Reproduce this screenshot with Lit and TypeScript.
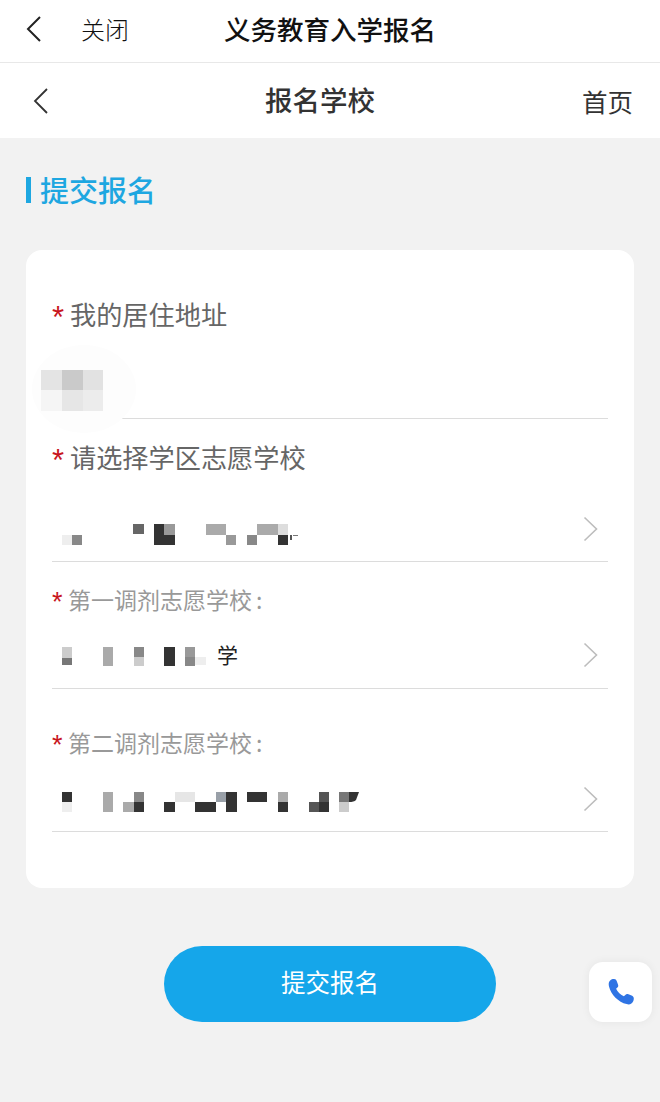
import { LitElement, html, css, svg } from "lit";
import { customElement } from "lit/decorators.js";

type Tile = [number, number, number, number, string];

const A = "#333333";
const schoolTiles: Tile[] = [
  [62, 11, 10, 10, "#eeeeee"], [72, 11, 10, 10, "#888888"],
  [133, 0, 11, 10, "#666666"], [154, 0, 10, 21, A], [164, 11, 11, 10, A], [164, 0, 11, 11, "#999999"],
  [206, 0, 20, 11, "#aaaaaa"], [226, 11, 10, 10, "#999999"],
  [247, 11, 10, 10, "#888888"], [257, 0, 21, 11, "#aaaaaa"], [278, 0, 10, 11, "#dddddd"], [278, 11, 10, 10, A],
  [290, 11, 2, 5, "#555555"], [293, 11, 5, 1, "#777777"],
];
const firstTiles: Tile[] = [
  [62, 0, 10, 11, "#cccccc"], [62, 11, 10, 7, "#777777"],
  [103, 0, 10, 19, "#aaaaaa"],
  [134, 0, 10, 10, "#888888"], [134, 10, 10, 9, "#cccccc"],
  [164, 0, 11, 19, A],
  [185, 0, 10, 10, "#999999"], [185, 10, 10, 9, "#888888"], [195, 10, 11, 8, "#eeeeee"],
];
const secondTiles: Tile[] = [
  [62, 0, 10, 10, A], [62, 10, 10, 10, "#eeeeee"],
  [103, 0, 10, 20, "#aaaaaa"],
  [123, 10, 11, 10, "#aaaaaa"], [134, 0, 10, 10, "#888888"], [134, 10, 10, 10, A],
  [164, 10, 11, 10, A], [175, 0, 20, 10, "#e6e6e6"], [195, 10, 21, 10, A],
  [216, 0, 10, 10, "#99a0a8"], [226, 0, 11, 20, A],
  [247, 0, 20, 10, A],
  [278, 0, 10, 10, "#aaaaaa"], [278, 10, 10, 10, A],
  [309, 10, 10, 10, "#555555"], [319, 0, 10, 10, "#555555"], [319, 10, 10, 10, A],
  [339, 0, 10, 10, "#777777"], [339, 10, 10, 10, "#cccccc"],
];
const addressTiles: Tile[] = [
  [41, 0, 21, 20, "#e4e4e4"], [62, 0, 21, 20, "#cacaca"], [83, 0, 20, 20, "#e2e2e2"],
  [41, 20, 21, 21, "#f5f5f5"], [62, 20, 21, 21, "#e6e6e6"], [83, 20, 20, 21, "#ececec"],
];

const mosaic = (tiles: Tile[], w: number, h: number, extra: unknown = null) => html`
  <svg class="mosaic" width=${w} height=${h} viewBox="52 0 ${w} ${h}" aria-hidden="true">
    ${tiles.map(([x, y, tw, th, c]) => svg`<rect x=${x} y=${y} width=${tw} height=${th} fill=${c}></rect>`)}
    ${extra}
  </svg>`;

const chevron = html`
  <svg class="chevron" width="16" height="26" viewBox="0 0 16 26" fill="none" aria-hidden="true">
    <path d="M1.5 1.5 L13.5 13 L1.5 24.5" stroke="#bdbdbd" stroke-width="1.6"></path>
  </svg>`;

@customElement("app-root")
export class AppRoot extends LitElement {
  static styles = css`
    :host {
      display: block;
      width: 660px;
      height: 1102px;
      overflow: hidden;
      position: relative;
      background: #f2f2f2;
      font-family: "Noto Sans CJK SC", "Noto Sans", sans-serif;
    }
    .topbar {
      height: 62px;
      box-sizing: content-box;
      background: #fff;
      border-bottom: 1px solid #e8e8e8;
      display: grid;
      grid-template-columns: 1fr auto 1fr;
      align-items: center;
    }
    .topleft { display: flex; align-items: center; gap: 39px; padding: 0 0 4px 26px; }
    .close { font-size: 24px; color: #111; line-height: 1; font-weight: 300; }
    .toptitle { font-size: 26.5px; font-weight: 500; color: #111; line-height: 1; padding-bottom: 4px; }
    .nav {
      height: 75px;
      background: #fff;
      display: grid;
      grid-template-columns: 232px auto 1fr;
      align-items: center;
      padding: 0 27px 0 33px;
    }
    .navtitle { font-size: 27.5px; font-weight: 500; color: #333; line-height: 1; padding-bottom: 2px; }
    .home { justify-self: end; font-size: 25.5px; color: #333; line-height: 1; font-weight: 400; }
    .heading {
      display: flex;
      align-items: center;
      gap: 9px;
      margin: 36px 0 0 26px;
      height: 30px;
    }
    .heading i { width: 5px; height: 26px; background: #1ea7e1; display: block; margin-top: 2px; }
    .heading span { font-size: 29px; font-weight: 500; color: #1ea7e1; line-height: 1; }
    .card {
      position: relative;
      margin: 46px 26px 0;
      height: 638px;
      background: #fff;
      border-radius: 16px;
      box-sizing: border-box;
      padding: 0 26px;
      overflow: hidden;
    }
    .field {
      display: flex;
      flex-direction: column;
      border-bottom: 1.5px solid #dcdcdc;
      box-sizing: border-box;
    }
    .f1 { height: 169px; padding-top: 47px; }
    .f2 { height: 143px; padding-top: 21px; }
    .f3 { height: 127px; padding-top: 23px; }
    .f4 { height: 143px; padding-top: 39px; }
    .label { display: flex; align-items: center; height: 34px; color: #666; font-size: 26.2px; line-height: 1; }
    .label b {
      color: #c8161d;
      font-weight: 400;
      font-size: 31px;
      width: 18px;
      line-height: 1;
      font-family: "Liberation Sans", sans-serif;
      position: relative;
      top: 3px;
    }
    .small { font-size: 23px; color: #999; height: 28px; }
    .small b { width: 16px; font-size: 27px; }
    .colon { margin-left: 4px; }
    .value { display: flex; align-items: flex-start; }
    .f1 .value { margin-top: 39px; position: relative; }
    .f2 .value { margin-top: 50px; height: 21px; }
    .f3 .value { margin-top: 34px; height: 22px; }
    .f4 .value { margin-top: 36px; height: 20px; }
    .mosaic { display: block; flex: none; overflow: visible; }
    .chevron { margin-left: auto; margin-right: 9px; flex: none; }
    .f2 .chevron { margin-top: -8px; }
    .f3 .chevron { margin-top: -5px; }
    .f4 .chevron { margin-top: -6px; }
    .xue { font-size: 21px; color: #222; line-height: 1; font-weight: 400; margin-top: -3px; }
    .blob {
      position: absolute;
      left: 6px;
      top: 95px;
      width: 104px;
      height: 88px;
      border-radius: 50%;
      background: #fdfdfd;
    }
    .footer { display: flex; justify-content: center; margin-top: 58px; }
    .submit {
      width: 332px;
      height: 76px;
      box-sizing: border-box;
      padding-bottom: 3px;
      border-radius: 38px;
      background: #15a6ea;
      color: #fff;
      font-size: 24.5px;
      font-weight: 400;
      display: flex;
      align-items: center;
      justify-content: center;
      line-height: 1;
    }
    .phone {
      position: absolute;
      left: 589px;
      top: 962px;
      width: 63px;
      height: 60px;
      background: #fff;
      border-radius: 14px;
      box-shadow: 0 0 10px rgba(0, 0, 0, 0.06);
      display: flex;
      align-items: center;
      justify-content: center;
    }
  `;

  render() {
    return html`
      <div class="topbar">
        <div class="topleft">
          <svg width="16" height="26" viewBox="0 0 16 26" fill="none" aria-hidden="true">
            <path d="M14 1 L2 13 L14 25" stroke="#222" stroke-width="2"></path>
          </svg>
          <span class="close">关闭</span>
        </div>
        <div class="toptitle">义务教育入学报名</div>
        <div></div>
      </div>
      <div class="nav">
        <svg width="16" height="26" viewBox="0 0 16 26" fill="none" aria-hidden="true">
          <path d="M14 1 L2 13 L14 25" stroke="#333" stroke-width="1.8"></path>
        </svg>
        <div class="navtitle">报名学校</div>
        <div class="home">首页</div>
      </div>
      <div class="heading"><i></i><span>提交报名</span></div>
      <div class="card">
        <div class="blob"></div>
        <div class="field f1">
          <div class="label"><b>*</b>我的居住地址</div>
          <div class="value">${mosaic(addressTiles, 80, 41)}</div>
        </div>
        <div class="field f2">
          <div class="label"><b>*</b>请选择学区志愿学校</div>
          <div class="value">${mosaic(schoolTiles, 250, 21)}${chevron}</div>
        </div>
        <div class="field f3">
          <div class="label small"><b>*</b>第一调剂志愿学校<span class="colon">:</span></div>
          <div class="value">${mosaic(firstTiles, 165, 19)}<span class="xue">学</span>${chevron}</div>
        </div>
        <div class="field f4">
          <div class="label small"><b>*</b>第二调剂志愿学校<span class="colon">:</span></div>
          <div class="value">${mosaic(secondTiles, 310, 20, svg`<path d="M349 0H359L356 8Q354 10 349 10Z" fill="#333333"></path>`)}${chevron}</div>
        </div>
      </div>
      <div class="footer"><div class="submit">提交报名</div></div>
      <div class="phone">
        <svg width="30" height="30" viewBox="0 0 30 30" aria-hidden="true">
          <path fill="#2f74e4" d="M3.5 4.2 C4.6 2.6 6 2 8 2 C9.6 2 10.2 2.8 10.7 4 L12 7.4 C12.5 8.7 12.3 9.6 11.4 10.5 L10.1 11.8 C11.4 14.8 14.8 18 17.9 19.3 L19.3 17.9 C20.2 17 21.2 16.8 22.4 17.3 L25.6 18.6 C27 19.2 27.8 20 27.8 21.6 C27.8 23.6 27 25.4 25.4 26.5 C24 27.5 22.4 27.6 20.6 27.1 C12.4 25 5 17.6 3 9.4 C2.5 7.4 2.6 5.6 3.5 4.2 Z"></path>
        </svg>
      </div>
    `;
  }
}
